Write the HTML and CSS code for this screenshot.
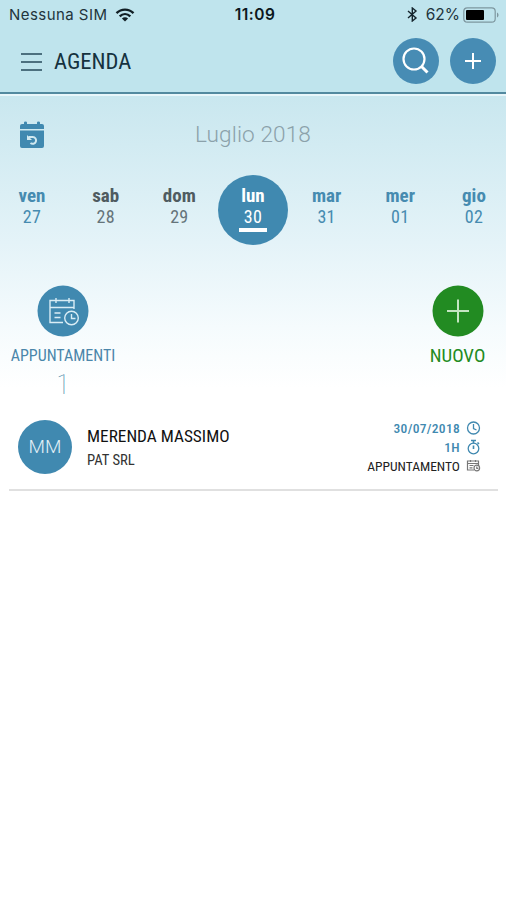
FILE: index.html
```html
<!DOCTYPE html>
<html lang="it">
<head>
    <meta charset="UTF-8">
    <title>Agenda</title>
    <link rel="stylesheet" href="styles.css">
</head>
<body>
    <div class="top">
        <div class="status">
            <div class="carrier">
                <span class="nowrap">Nessuna SIM</span>
                <svg width="20" height="14" viewBox="0 0 20 14" fill="none" stroke="#111e24" stroke-width="2.4">
                    <path d="M1.5 5.2C6.4.4 13.6.4 18.5 5.2M4.7 8.3c3.1-2.9 7.5-2.9 10.6 0"/>
                    <path d="M6.9 10.4c1.800-1.600 4.400-1.600 6.200 0L10 13.500z" fill="#111e24" stroke="none"/>
                </svg>
            </div>
            <div class="time">11:09</div>
            <div class="power">
                <svg width="11" height="15" viewBox="0 0 11 15" fill="none" stroke="#14242c" stroke-width="1.4">
                    <path d="M1 4l8 7-3.700 3V1L9 4l-8 7"/>
                </svg>
                <span class="percent">62%</span>
                <svg width="36" height="16" viewBox="0 0 36 16">
                    <rect x=".8" y=".8" width="31.400" height="14.400" rx="3.500" fill="none" stroke="#7e979f" stroke-width="1.200"/>
                    <rect x="3" y="3" width="18" height="10" rx="1" fill="#000"/>
                    <path d="M34 5.500c2 .8 2 4.200 0 5z" fill="#7e979f"/>
                </svg>
            </div>
        </div>
        <div class="header">
            <svg class="menu" width="22" height="20" viewBox="0 0 22 20" stroke="#4c707f" stroke-width="2">
                <path d="M0 2h21M0 10h21M0 18h21"/>
            </svg>
            <h1>AGENDA</h1>
            <div class="round">
                <svg width="46" height="46" viewBox="0 0 46 46" fill="none" stroke="#fff" stroke-width="2.200">
                    <circle cx="21" cy="21" r="10.500"/>
                    <path d="M28.500 28.500l6 6" stroke-width="3"/>
                </svg>
            </div>
            <div class="round">
                <svg width="46" height="46" viewBox="0 0 46 46" stroke="#fff" stroke-width="2">
                    <path d="M15 23h16M23 15v16"/>
                </svg>
            </div>
        </div>
    </div>

    <div class="calendar">
        <div class="month">
            <svg width="24" height="27" viewBox="0 0 24 27">
                <path d="M0 8V5q0-2 2-2h2V1.500q0-1 1.500-1t1.500 1V3h10V1.500q0-1 1.500-1t1.500 1V3h2q2 0 2 2v3zM0 9.500h24V25q0 2-2 2H2q-2 0-2-2z" fill="#4089b0"/>
                <path d="M8.500 16h4.300a3.400 3.400 0 1 1-2.300 6" fill="none" stroke="#d0e9f0" stroke-width="2"/>
                <path d="M7 14v5h5z" fill="#d0e9f0"/>
            </svg>
            <span>Luglio 2018</span>
        </div>
        <div class="days">
            <div class="day"><b>ven</b><span>27</span></div>
            <div class="day off"><b>sab</b><span>28</span></div>
            <div class="day off"><b>dom</b><span>29</span></div>
            <div class="day selected"><b>lun</b><span>30</span></div>
            <div class="day"><b>mar</b><span>31</span></div>
            <div class="day"><b>mer</b><span>01</span></div>
            <div class="day"><b>gio</b><span>02</span></div>
        </div>
        <div class="actions">
            <div class="action">
                <svg width="52" height="52" viewBox="0 0 52 52" fill="none" stroke="#d9edf5" stroke-width="1.400">
                    <circle cx="26" cy="26" r="25.500" fill="#4089b0" stroke="none"/>
                    <path d="M26 37.500H13v-22h24v8.500M13 22.500h24M19 13v5M32 13v5M17.500 28h6M17.500 32.500h6"/>
                    <circle cx="34.500" cy="33" r="6.800"/>
                    <path d="M34.500 29v4.500h4"/>
                </svg>
                <div class="action-label">APPUNTAMENTI</div>
                <div class="count">1</div>
            </div>
            <div class="action new">
                <svg width="52" height="52" viewBox="0 0 52 52">
                    <circle cx="26" cy="26" r="25.500" fill="#228b22"/>
                    <path d="M15 26h22M26 14.500v23" stroke="#c4e5c2" stroke-width="2"/>
                </svg>
                <div class="action-label">NUOVO</div>
            </div>
        </div>
    </div>

    <div class="appointment">
        <div class="avatar">MM</div>
        <div class="who">
            <div class="name">MERENDA MASSIMO</div>
            <div class="company">PAT SRL</div>
        </div>
        <div class="info">
            <div class="line date">
                <span>30/07/2018</span>
                <svg width="15" height="16" viewBox="0 0 15 16" fill="none" stroke="#4089b0" stroke-width="1.300">
                    <circle cx="7.500" cy="8" r="6"/>
                    <path d="M7.500 4v4.500l3 1.500"/>
                </svg>
            </div>
            <div class="line hours">
                <span>1H</span>
                <svg width="15" height="16" viewBox="0 0 15 16" fill="none" stroke="#4089b0" stroke-width="1.300">
                    <circle cx="7.500" cy="9.500" r="5.300"/>
                    <path d="M5 1.500h5M7.500 1.500v3M11.500 3.500l1.500 1.500M7.500 6.500v3.500" stroke-width="1.600"/>
                </svg>
            </div>
            <div class="line type">
                <span>APPUNTAMENTO</span>
                <svg width="15" height="16" viewBox="0 0 15 16" fill="none" stroke="#777" stroke-width="1.200">
                    <path d="M8 12H1.500V3h11v4M1.500 5.500h11M4.500 2v2M9.500 2v2M3.500 7.500h4M3.500 9.800h3"/>
                    <circle cx="10.800" cy="10" r="2.800"/>
                    <path d="M10.800 8.500v1.800h1.500"/>
                </svg>
            </div>
        </div>
    </div>
</body>
</html>
```

FILE: styles.css
```css
* { box-sizing: border-box; }
body { margin: 0; background: #fff; font-family: "Roboto Condensed", Roboto, sans-serif; font-stretch: 75%; color: #111; }
svg { display: block; flex: none; }
.top { height: 96px; background: #bfe4ed; border-bottom: 2px solid #e8f6fa; }
.status { height: 28px; display: grid; grid-template-columns: 1fr auto 1fr; align-items: center; padding: 1px 7px 0 9px; font-family: Inter, sans-serif; font-stretch: normal; font-size: 15px; color: #22343c; }
.carrier { display: flex; align-items: center; gap: 8px; }
.nowrap { white-space: nowrap; letter-spacing: 0.45px; }
.time { font-weight: 600; color: #0c181d; font-size: 15.5px; letter-spacing: 0.5px; padding-left: 2px; }
.power { display: flex; align-items: center; justify-content: flex-end; }
.percent { margin: 0 3px 0 8px; font-size: 15.5px; }
.header { height: 66px; padding: 0 10px 0 21px; display: flex; align-items: center; border-bottom: 2px solid #52899f; }
.menu { margin-top: 3px; }
h1 { flex: 1; margin: 3px 0 0 11px; font-size: 22.6px; font-weight: 400; color: #15323f; }
.round { width: 46px; height: 46px; border-radius: 50%; background: #478cb4; margin: 2px 0 0 11px; }

.calendar { height: 304px; padding-top: 23px; background: linear-gradient(#c9e7ef, #e4f3f8 48%, #f5fbfd 76%, #fff 96%); }
.month { display: grid; grid-template-columns: 24px 1fr 24px; align-items: center; padding: 0 20px; height: 30px; }
.month span { text-align: center; font-family: Roboto, sans-serif; font-size: 22.6px; font-weight: 300; font-stretch: 100%; color: #8ba1aa; letter-spacing: 0.1px; }
.days { display: flex; justify-content: space-between; height: 70px; margin: 26px -3px 0; }
.day { width: 70px; height: 70px; padding-top: 10px; display: flex; flex-direction: column; align-items: center; font-size: 18px; line-height: 21px; color: #468bb0; }
.day b { font-size: 19px; }
.day span { height: 23px; line-height: 21px; letter-spacing: 0.3px; }
.off { color: #65747a; }
.off b { color: #4f5b60; }
.selected { border-radius: 50%; background: #4089b0; color: #fff; }
.selected span { width: 28px; height: 26px; text-align: center; border-bottom: 4px solid #fff; }
.actions { display: flex; justify-content: space-between; padding: 40px 0 0; }
.action { width: 126px; display: flex; flex-direction: column; align-items: center; color: #4b86aa; }
.action-label { margin-top: 9px; font-size: 16px; line-height: 20px; }
.count { font-size: 28px; line-height: 38px; font-weight: 100; }
.new { width: 97px; color: #228b22; }
.new .action-label { font-size: 19px; }

.appointment { height: 91px; margin: 0 8px 0 9px; padding-left: 9px; display: flex; border-bottom: 2px solid #e0e0e0; }
.avatar { width: 54px; height: 54px; margin-top: 20px; border-radius: 50%; background: #4089b0; color: #e2f0f7; font-family: Roboto, sans-serif; font-size: 19px; line-height: 54px; text-align: center; font-stretch: 100%; font-weight: 300; }
.who { flex: 1; margin: 25px 0 0 15px; }
.name { font-size: 17.3px; line-height: 22px; }
.company { font-size: 14.7px; line-height: 26px; color: #333; }
.info { margin: 18px 17px 0 0; }
.line { display: flex; align-items: center; justify-content: flex-end; gap: 6px; height: 19px; font-size: 13.5px; }
.date, .hours { color: #4089b0; font-weight: 500; letter-spacing: 0.3px; }
.type { color: #222; }
```
